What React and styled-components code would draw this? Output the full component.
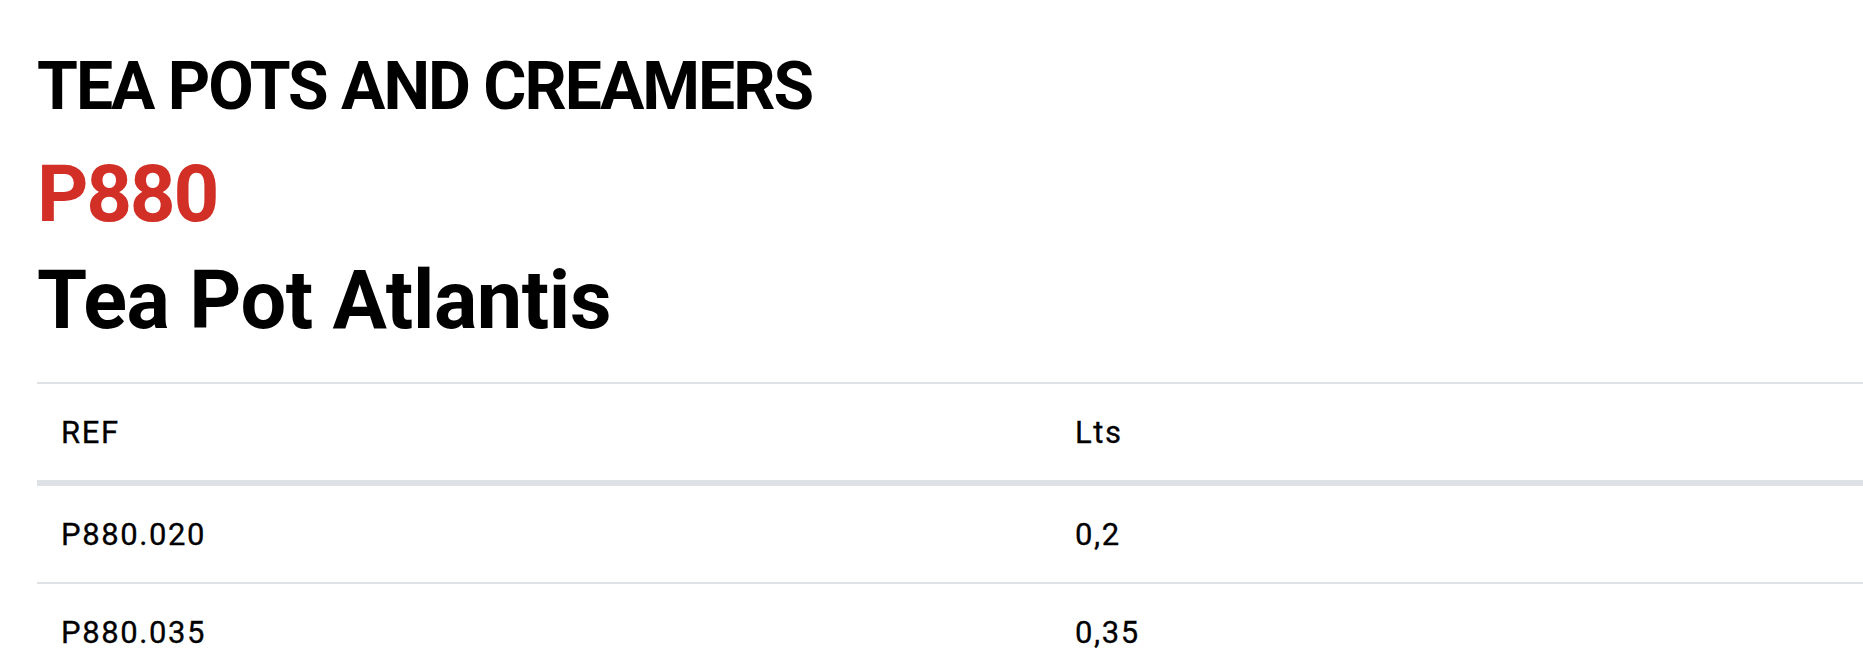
import React from "react";
import styled, { createGlobalStyle } from "styled-components";

const Global = createGlobalStyle`
  html, body { margin: 0; padding: 0; background: #fff; }
  body { font-family: Roboto, "Noto Sans", Arial, sans-serif; color: #000; overflow: hidden; }
`;

const Page = styled.main`
  padding: 47px 0 0 37px;
`;

const Category = styled.h2`
  margin: 0;
  font-size: 66px;
  line-height: 79px;
  font-weight: 700;
  letter-spacing: -2px;
  text-transform: uppercase;
  color: #000;
`;

const Code = styled.div`
  margin-top: 20px;
  font-size: 80px;
  line-height: 96px;
  font-weight: 700;
  letter-spacing: -2.3px;
  color: #d22f27;
`;

const Title = styled.h1`
  margin: 10px 0 0;
  font-size: 81px;
  line-height: 97px;
  font-weight: 700;
  letter-spacing: -0.4px;
  color: #000;
`;

const Table = styled.div`
  margin-top: 33px;
  border-top: 2px solid #dee2e6;
`;

const Row = styled.div`
  display: grid;
  grid-template-columns: 1014px 1fr;
  border-bottom: ${(p) => (p.$head ? "6px solid #dee2e6" : "2px solid #dee2e6")};
`;

const Cell = styled.div`
  padding: 25px 24px 23px;
  font-size: 31px;
  line-height: 48px;
  font-weight: 400;
  letter-spacing: 1.6px;
  color: #000;
  -webkit-text-stroke: 0.3px #000;
`;

const rows = [
  ["P880.020", "0,2"],
  ["P880.035", "0,35"],
];

export default function App() {
  return (
    <>
      <Global />
      <Page>
        <Category>Tea pots and creamers</Category>
        <Code>P880</Code>
        <Title>Tea Pot Atlantis</Title>
        <Table>
          <Row $head>
            <Cell>REF</Cell>
            <Cell>Lts</Cell>
          </Row>
          {rows.map(([ref, lts]) => (
            <Row key={ref}>
              <Cell>{ref}</Cell>
              <Cell>{lts}</Cell>
            </Row>
          ))}
        </Table>
      </Page>
    </>
  );
}
